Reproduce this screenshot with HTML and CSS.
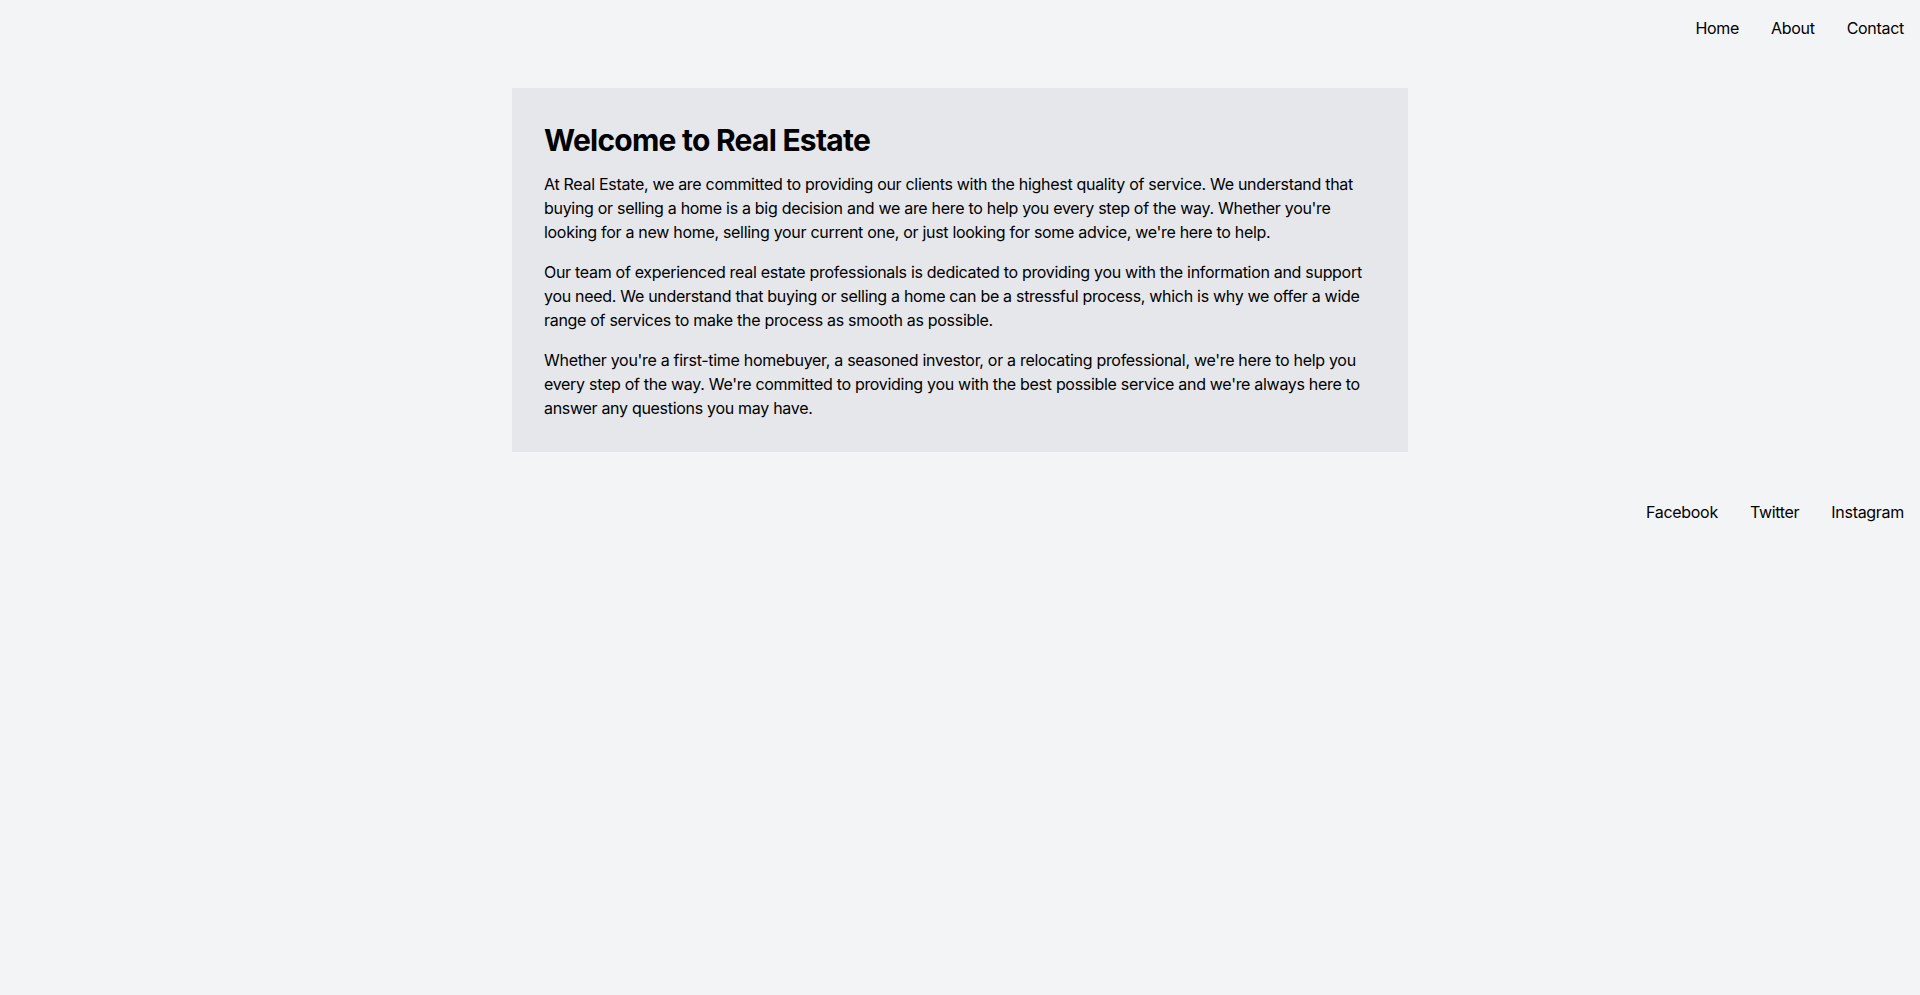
FILE: index.html
```html
<!DOCTYPE html>
<html lang="en">
<head>
<meta charset="utf-8">
<title>Real Estate</title>
<link rel="stylesheet" href="styles.css">
</head>
<body>
<header class="topbar">
  <nav class="links">
    <a href="#">Home</a>
    <a href="#">About</a>
    <a href="#">Contact</a>
  </nav>
</header>
<main class="card">
  <h1 class="title">Welcome to Real Estate</h1>
  <p class="text">At Real Estate, we are committed to providing our clients with the highest quality of service. We understand that buying or selling a home is a big decision and we are here to help you every step of the way. Whether you're looking for a new home, selling your current one, or just looking for some advice, we're here to help.</p>
  <p class="text">Our team of experienced real estate professionals is dedicated to providing you with the information and support you need. We understand that buying or selling a home can be a stressful process, which is why we offer a wide range of services to make the process as smooth as possible.</p>
  <p class="text">Whether you're a first-time homebuyer, a seasoned investor, or a relocating professional, we're here to help you every step of the way. We're committed to providing you with the best possible service and we're always here to answer any questions you may have.</p>
</main>
<footer class="bottombar">
  <nav class="links">
    <a href="#">Facebook</a>
    <a href="#">Twitter</a>
    <a href="#">Instagram</a>
  </nav>
</footer>
</body>
</html>
```

FILE: styles.css
```css
html, body {
  margin: 0;
  padding: 0;
}
body {
  background: #f3f4f6;
  color: #000;
  font-family: Inter, "Noto Sans", sans-serif;
  font-size: 16px;
  line-height: 24px;
  letter-spacing: -0.3px;
  min-height: 995px;
}
.topbar, .bottombar {
  display: flex;
  justify-content: flex-end;
  padding: 16px;
}
.bottombar {
  margin-top: 32px;
}
.links {
  display: flex;
  gap: 32px;
}
.links a {
  color: #000;
  text-decoration: none;
  font-size: 16px;
  line-height: 24px;
}
.card {
  display: block;
  width: 896px;
  box-sizing: border-box;
  margin: 32px auto 0;
  padding: 32px;
  background: #e5e7eb;
}
.title {
  margin: 0 0 14px;
  padding-top: 2px;
  font-size: 30px;
  line-height: 36px;
  font-weight: 700;
  letter-spacing: -0.75px;
}
.text {
  margin: 0 0 16px;
  font-size: 16px;
  line-height: 24px;
}
.text:last-child {
  margin-bottom: 0;
}
```
